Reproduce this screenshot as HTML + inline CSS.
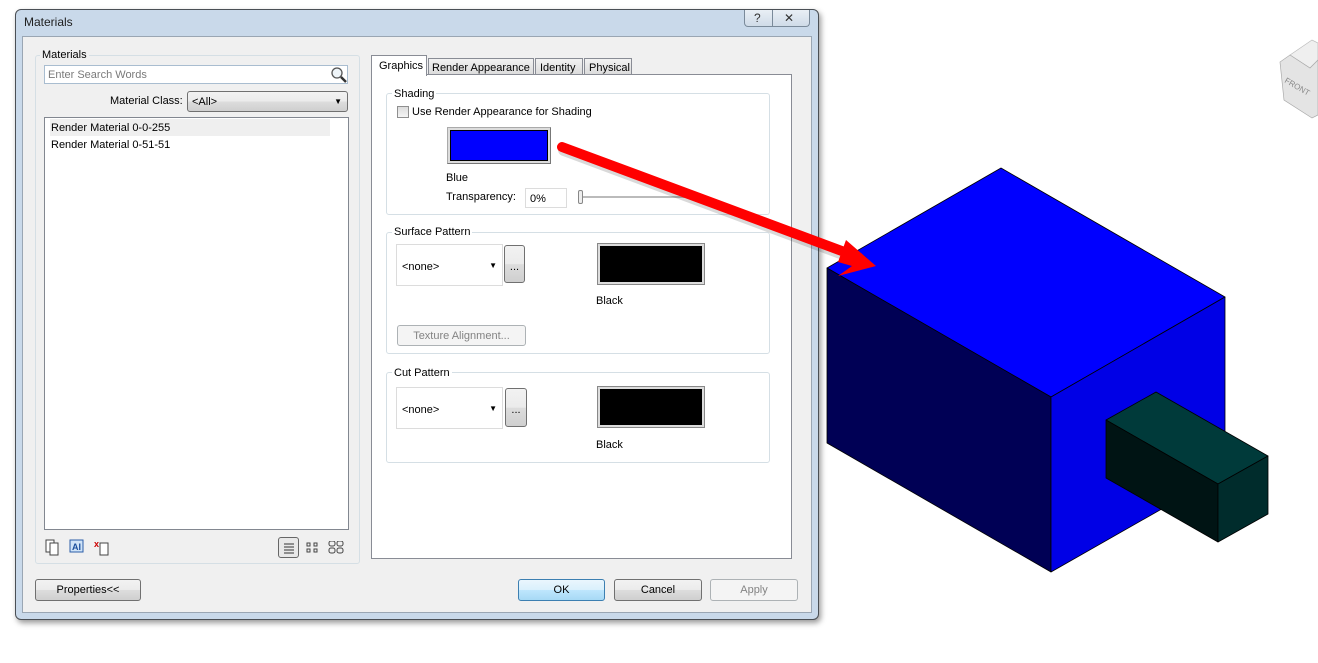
<!DOCTYPE html>
<html><head><meta charset="utf-8"><style>
*{box-sizing:border-box;margin:0;padding:0}
body{width:1318px;height:663px;background:#fff;position:relative;overflow:hidden;font-family:"Liberation Sans",sans-serif;font-size:11px;color:#000}
.a{position:absolute}
.win{left:15px;top:9px;width:804px;height:611px;background:#c9d9ea;border:1px solid #4a4f55;border-radius:6px;box-shadow:2px 3px 6px rgba(0,0,0,.4)}
.client{left:22px;top:36px;width:790px;height:577px;background:#f0f0f0;border:1px solid #9aa6b3}
.grp{border:1px solid #d5dfe5;border-radius:3px}
.lbl{background:#f0f0f0;padding:0 2px}
.btn{border:1px solid #707070;border-radius:3px;background:linear-gradient(#f2f2f2,#ebebeb 50%,#dddddd 51%,#cfcfcf);text-align:center;line-height:20px}
.sw{border:2px solid #dcdcdc;outline:1px solid #888;box-shadow:1px 1px 0 #777}
.t{margin-top:1px}
</style></head><body>
<div class="a win"></div>
<div class="a" style="left:24px;top:15px;font-size:12px;color:#1e1e1e">Materials</div>
<div class="a" style="left:744px;top:10px;width:66px;height:17px;border:1px solid #7a8a9a;border-top:none;border-radius:0 0 4px 4px;background:linear-gradient(#e9eff5,#cfdbe8)"></div>
<div class="a" style="left:772px;top:10px;width:1px;height:17px;background:#7a8a9a"></div>
<div class="a" style="left:754px;top:11px;font-size:12px;color:#333">?</div>
<div class="a" style="left:784px;top:11px;font-size:12px;color:#333">✕</div>
<div class="a client"></div>
<!-- left group -->
<div class="a grp" style="left:35px;top:55px;width:325px;height:509px"></div>
<div class="a lbl" style="left:40px;top:49px">Materials</div>
<div class="a" style="left:44px;top:65px;width:304px;height:19px;background:#fff;border:1px solid #a9bdd0;color:#7a7a7a;padding:3px 3px">Enter Search Words</div>
<svg class="a" style="left:330px;top:66px" width="17" height="17"><circle cx="7" cy="7" r="5" fill="#eef4f8" stroke="#555" stroke-width="1.3"/><path d="M11 11 L16 16" stroke="#333" stroke-width="2.5"/></svg>
<div class="a" style="left:110px;top:95px">Material Class:</div>
<div class="a btn" style="left:187px;top:91px;width:161px;height:21px;text-align:left;padding-left:4px;line-height:20px">&lt;All&gt;<span style="position:absolute;right:5px;top:0;font-size:8px">▼</span></div>
<div class="a" style="left:44px;top:117px;width:305px;height:413px;background:#fff;border:1px solid #828790"></div>
<div class="a" style="left:50px;top:119px;width:280px;height:17px;background:#efefef"></div>
<div class="a" style="left:51px;top:122px">Render Material 0-0-255</div>
<div class="a" style="left:51px;top:139px">Render Material 0-51-51</div>
<svg class="a" style="left:45px;top:538px" width="70" height="18"><rect x="1" y="2" width="8" height="12" fill="#fff" stroke="#444"/><rect x="5" y="5" width="8" height="12" fill="#fff" stroke="#444"/><rect x="25" y="2" width="13" height="12" fill="#cfe3f7" stroke="#2b5ea8"/><text x="27" y="12" font-size="9" font-family="Liberation Sans" fill="#1b4f9c" font-weight="bold">AI</text><text x="49" y="9" font-size="9" fill="#c00" font-family="Liberation Sans" font-weight="bold">x</text><rect x="55" y="5" width="8" height="12" fill="#fff" stroke="#444"/></svg>
<div class="a" style="left:278px;top:537px;width:21px;height:21px;border:1px solid #666;border-radius:3px;background:#e8e8e8"></div>
<svg class="a" style="left:282px;top:541px" width="66" height="14"><path d="M2 3h10M2 6h10M2 9h10M2 12h10" stroke="#333"/><g fill="none" stroke="#444"><rect x="25" y="2" width="3" height="3"/><rect x="32" y="2" width="3" height="3"/><rect x="25" y="8" width="3" height="3"/><rect x="32" y="8" width="3" height="3"/><rect x="47" y="0" width="6" height="5" rx="2"/><rect x="55" y="0" width="6" height="5" rx="2"/><rect x="47" y="7" width="6" height="5" rx="2"/><rect x="55" y="7" width="6" height="5" rx="2"/></g></svg>
<!-- tabs -->
<div class="a" style="left:371px;top:74px;width:421px;height:485px;background:#fff;border:1px solid #898c95"></div>
<div class="a" style="left:371px;top:55px;width:56px;height:21px;background:#fff;border:1px solid #898c95;border-bottom:none;padding:4px 0 0 7px">Graphics</div>
<div class="a" style="left:428px;top:58px;width:106px;height:17px;background:linear-gradient(#f2f2f2,#dcdcdc);border:1px solid #898c95;padding:3px 0 0 3px">Render Appearance</div>
<div class="a" style="left:535px;top:58px;width:48px;height:17px;background:linear-gradient(#f2f2f2,#dcdcdc);border:1px solid #898c95;padding:3px 0 0 4px">Identity</div>
<div class="a" style="left:584px;top:58px;width:48px;height:17px;background:linear-gradient(#f2f2f2,#dcdcdc);border:1px solid #898c95;padding:3px 0 0 4px">Physical</div>
<!-- shading -->
<div class="a grp" style="left:386px;top:93px;width:384px;height:122px"></div>
<div class="a" style="left:392px;top:88px;background:#fff;padding:0 2px">Shading</div>
<div class="a" style="left:397px;top:106px;width:12px;height:12px;border:1px solid #8f8f8f;background:linear-gradient(#ddd,#f5f5f5)"></div>
<div class="a" style="left:412px;top:106px">Use Render Appearance for Shading</div>
<div class="a" style="left:447px;top:127px;width:104px;height:37px;background:#dcdcdc;border:1px solid #aaa;border-right-color:#777;border-bottom-color:#777;padding:2px"><div style="width:100%;height:100%;background:#0000ff;border:1px solid #000"></div></div>
<div class="a" style="left:446px;top:172px">Blue</div>
<div class="a" style="left:446px;top:191px">Transparency:</div>
<div class="a" style="left:525px;top:188px;width:42px;height:20px;border:1px solid #dcdcdc;padding:4px 4px">0%</div>
<div class="a" style="left:580px;top:196px;width:110px;height:2px;background:#bbb"></div>
<div class="a" style="left:578px;top:190px;width:5px;height:14px;border:1px solid #888;border-radius:2px;background:#eee"></div>
<!-- surface -->
<div class="a grp" style="left:386px;top:232px;width:384px;height:122px"></div>
<div class="a" style="left:392px;top:226px;background:#fff;padding:0 2px">Surface Pattern</div>
<div class="a" style="left:396px;top:244px;width:107px;height:42px;border:1px solid #dcdcdc;padding:16px 5px">&lt;none&gt;<span style="position:absolute;right:5px;top:16px;font-size:8px">▼</span></div>
<div class="a btn" style="left:504px;top:245px;width:21px;height:38px;line-height:42px">...</div>
<div class="a sw" style="left:598px;top:244px;width:106px;height:40px;background:#000"></div>
<div class="a" style="left:596px;top:295px">Black</div>
<div class="a" style="left:397px;top:325px;width:129px;height:21px;border:1px solid #adb2b5;border-radius:3px;background:#f4f4f4;color:#838383;text-align:center;line-height:20px">Texture Alignment...</div>
<!-- cut -->
<div class="a grp" style="left:386px;top:372px;width:384px;height:91px"></div>
<div class="a" style="left:392px;top:367px;background:#fff;padding:0 2px">Cut Pattern</div>
<div class="a" style="left:396px;top:387px;width:107px;height:42px;border:1px solid #dcdcdc;padding:16px 5px">&lt;none&gt;<span style="position:absolute;right:5px;top:16px;font-size:8px">▼</span></div>
<div class="a btn" style="left:505px;top:388px;width:22px;height:39px;line-height:42px">...</div>
<div class="a sw" style="left:598px;top:387px;width:106px;height:40px;background:#000"></div>
<div class="a" style="left:596px;top:439px">Black</div>
<!-- bottom -->
<div class="a btn" style="left:35px;top:579px;width:106px;height:22px;line-height:21px">Properties&lt;&lt;</div>
<div class="a btn" style="left:518px;top:579px;width:87px;height:22px;line-height:21px;border-color:#3c7fb1;background:linear-gradient(#eaf6fd,#d9f0fc 50%,#bee6fd 51%,#a7d9f5)">OK</div>
<div class="a btn" style="left:614px;top:579px;width:88px;height:22px;line-height:21px">Cancel</div>
<div class="a" style="left:710px;top:579px;width:88px;height:22px;border:1px solid #adb2b5;border-radius:3px;background:#f4f4f4;color:#838383;text-align:center;line-height:21px">Apply</div>
<!-- 3D -->
<svg class="a" style="left:0;top:0" width="1318" height="663">
<g stroke="#000" stroke-width="0.8" stroke-linejoin="round">
<polygon points="1001,168 1225,297 1051,397 827,268" fill="#0000ff"/>
<polygon points="827,268 1051,397 1051,572 827,443" fill="#000055"/>
<polygon points="1051,397 1225,297 1225,473 1051,572" fill="#0000e6"/>
<polygon points="1106,420 1156,392 1268,456 1218,484" fill="#003a3a"/>
<polygon points="1106,420 1218,484 1218,542 1106,478" fill="#001414"/>
<polygon points="1218,484 1268,456 1268,514 1218,542" fill="#002c2c"/>
</g>
<polygon points="1290,55 1312,40 1318,43 1318,60 1310,68" fill="#efefef" stroke="#bbb" stroke-width="0.7"/>
<polygon points="1290,55 1310,68 1318,60 1318,115 1312,118 1284,100 1280,62" fill="#e4e4e4" stroke="#aaa" stroke-width="0.7"/>
<text x="1284" y="82" font-size="8" fill="#888" font-family="Liberation Sans" transform="rotate(30 1284 82)">FRONT</text>
<line x1="564" y1="150" x2="862" y2="261" stroke="rgba(0,0,0,.15)" stroke-width="12" stroke-linecap="round"/>
<line x1="562" y1="147" x2="858" y2="257" stroke="#ff0000" stroke-width="10" stroke-linecap="round"/>
<polygon points="876,266 846,240 838,262 852,266 838,276" fill="#ff0000"/>
</svg>
</body></html>
